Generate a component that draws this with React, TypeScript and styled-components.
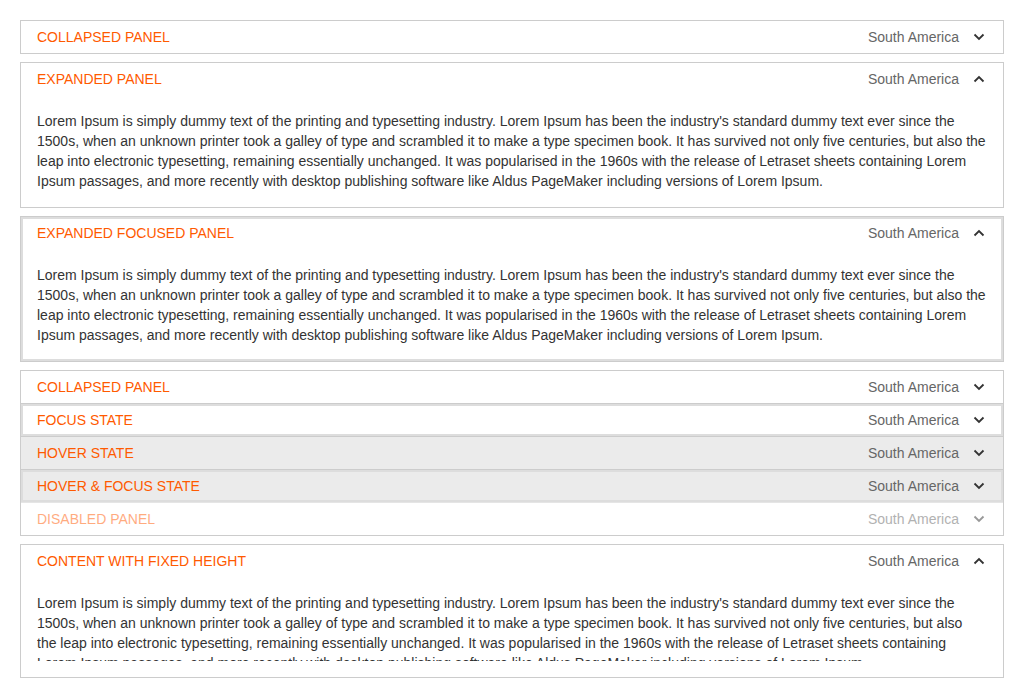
import React from "react";
import styled, { createGlobalStyle, css } from "styled-components";

const Global = createGlobalStyle`
  html, body { margin: 0; padding: 0; background: #fff; }
  body { font-family: "Liberation Sans", Arial, sans-serif; font-size: 14px; color: #333; }
  * { box-sizing: border-box; }
`;

const Page = styled.div`
  padding: 20px;
  display: flex;
  flex-direction: column;
  gap: 8px;
`;

const Panel = styled.div<{ $focused?: boolean }>`
  border: 1px solid #ccc;
  background: #fff;
  ${(p) => p.$focused && css`box-shadow: inset 0 0 0 2px #ddd;`}
`;

const Item = styled.div<{ $focused?: boolean; $hover?: boolean; $disabled?: boolean }>`
  & + & { border-top: 1px solid #ccc; }
  background: ${(p) => (p.$hover ? "#ebebeb" : "transparent")};
  ${(p) => p.$focused && css`box-shadow: inset 0 0 0 2px #ddd;`}
  ${(p) => p.$disabled && css`opacity: 0.5;`}
`;

const Header = styled.div`
  height: 32px;
  display: flex;
  align-items: center;
  padding: 0 18px 0 16px;
`;

const Title = styled.span`
  flex: 1;
  color: #ff5a00;
  font-size: 14px;
  text-transform: uppercase;
`;

const Region = styled.span`
  color: #666;
  font-size: 14px;
  margin-right: 14px;
`;

const Chevron = styled.svg`
  width: 12px;
  height: 8px;
  display: block;
`;

const Content = styled.div<{ $fixed?: boolean }>`
  padding: 16px;
  line-height: 20px;
  font-size: 14px;
  color: #333;
  ${(p) => p.$fixed && css`padding-right: 34px;`}
`;

const Clip = styled.div`
  height: 68px;
  overflow: hidden;
`;

const LOREM =
  "Lorem Ipsum is simply dummy text of the printing and typesetting industry. Lorem Ipsum has been the industry's standard dummy text ever since the 1500s, when an unknown printer took a galley of type and scrambled it to make a type specimen book. It has survived not only five centuries, but also the leap into electronic typesetting, remaining essentially unchanged. It was popularised in the 1960s with the release of Letraset sheets containing Lorem Ipsum passages, and more recently with desktop publishing software like Aldus PageMaker including versions of Lorem Ipsum.";

function Arrow({ up }: { up?: boolean }) {
  return (
    <Chevron viewBox="0 0 12 8">
      <polyline
        points={up ? "1.5,6.5 6,2 10.5,6.5" : "1.5,1.5 6,6 10.5,1.5"}
        fill="none"
        stroke="#333"
        strokeWidth="1.8"
      />
    </Chevron>
  );
}

function Head({ title, up }: { title: string; up?: boolean }) {
  return (
    <Header>
      <Title>{title}</Title>
      <Region>South America</Region>
      <Arrow up={up} />
    </Header>
  );
}

export default function App() {
  return (
    <>
      <Global />
      <Page>
        <Panel>
          <Head title="Collapsed Panel" />
        </Panel>
        <Panel>
          <Head title="Expanded Panel" up />
          <Content>{LOREM}</Content>
        </Panel>
        <Panel $focused>
          <Head title="Expanded Focused Panel" up />
          <Content>{LOREM}</Content>
        </Panel>
        <Panel>
          <Item>
            <Head title="Collapsed Panel" />
          </Item>
          <Item $focused>
            <Head title="Focus State" />
          </Item>
          <Item $hover>
            <Head title="Hover State" />
          </Item>
          <Item $hover $focused>
            <Head title="Hover & Focus State" />
          </Item>
          <Item $disabled>
            <Head title="Disabled Panel" />
          </Item>
        </Panel>
        <Panel>
          <Head title="Content with fixed height" up />
          <Content $fixed>
            <Clip>{LOREM}</Clip>
          </Content>
        </Panel>
      </Page>
    </>
  );
}
